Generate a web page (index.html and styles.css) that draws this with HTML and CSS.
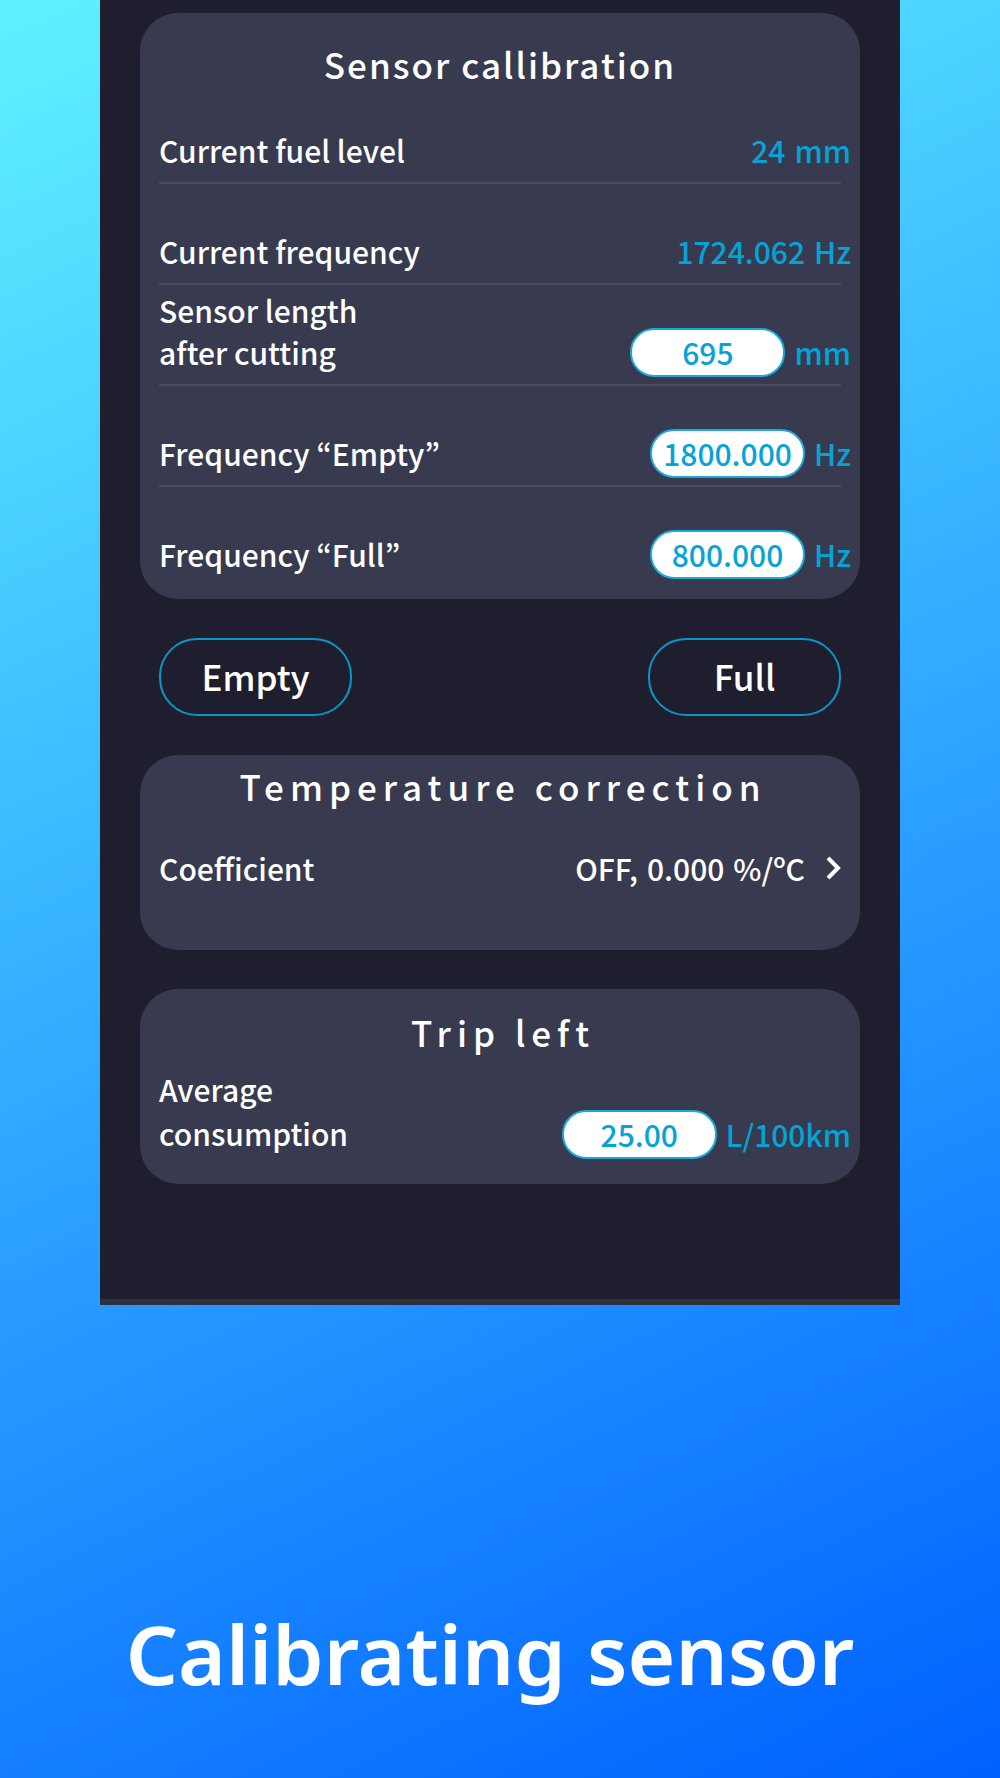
FILE: index.html
```
<!DOCTYPE html>
<html lang="en">

<head>
    <meta charset="UTF-8">
    <meta name="viewport" content="width=device-width, initial-scale=1.0">
    <title>Calibrating sensor</title>

    <link rel="stylesheet" href="styles.css">
</head>

<body>
    <main class="screen">
        <section class="card card-sensor">
            <h2 class="title">Sensor callibration</h2>
            <div class="row">
                <span class="label">Current fuel level</span>
                <div class="value"><span>24</span><span>mm</span></div>
            </div>
            <div class="row">
                <span class="label">Current frequency</span>
                <div class="value"><span>1724.062</span><span>Hz</span></div>
            </div>
            <div class="row">
                <label class="label" for="length">Sensor length<br>after cutting</label>
                <div class="value"><input type="text" id="length" value="695"><span>mm</span></div>
            </div>
            <div class="row">
                <label class="label" for="freqEmpty">Frequency “Empty”</label>
                <div class="value"><input type="text" id="freqEmpty" value="1800.000"><span>Hz</span></div>
            </div>
            <div class="row">
                <label class="label" for="freqFull">Frequency “Full”</label>
                <div class="value"><input type="text" id="freqFull" value="800.000"><span>Hz</span></div>
            </div>
        </section>

        <div class="actions">
            <button type="button">Empty</button>
            <button type="button">Full</button>
        </div>

        <section class="card card-temperature">
            <h2 class="title title-wide">Temperature correction</h2>
            <a class="row" href="#">
                <span class="label">Coefficient</span>
                <span class="setting">
                    <span>OFF,</span>
                    <span>0.000</span>
                    <span>%/ºC</span>
                    <svg class="chevron" viewBox="0 0 15 24" aria-hidden="true">
                        <path d="M2 2l10 10-10 10" />
                    </svg>
                </span>
            </a>
        </section>

        <section class="card card-trip">
            <h2 class="title title-wide">Trip left</h2>
            <div class="row">
                <label class="label" for="consumption">Average<br>consumption</label>
                <div class="value"><input type="text" id="consumption" value="25.00"><span>L/100km</span></div>
            </div>
        </section>
    </main>

    <h1 class="caption">Calibrating sensor</h1>
</body>

</html>
```

FILE: styles.css
```
* {
    margin: 0;
    padding: 0;
    box-sizing: border-box;
}

body {
    min-height: 100vh;
    font-family: "Noto Sans CJK JP", "Noto Sans", sans-serif;
    font-weight: 500;
    color: #fff;
    background: linear-gradient(155deg, #60f1ff, #0060ff);
}

.screen {
    width: 80%;
    margin: 0 auto;
    padding: 13px 40px 115px;
    background-color: #1f1e2e;
    border-bottom: 6px solid #302f3d;
}

/* Cards */

.card {
    padding: 0 19px;
    border-radius: 38px;
    background-color: #383a4f;
}

.card-sensor {
    padding-top: 32px;
    padding-bottom: 11px;
}

.card-temperature {
    padding-top: 12px;
    padding-bottom: 48px;
    margin-bottom: 39px;
}

.card-trip {
    padding-top: 24px;
    padding-bottom: 16px;
}

.title {
    font-size: 35px;
    font-weight: 500;
    line-height: 38px;
    letter-spacing: 2px;
    text-align: center;
}

.title-wide {
    letter-spacing: 6px;
    text-indent: 6px;
}

/* Rows */

.row {
    display: flex;
    justify-content: space-between;
    align-items: flex-end;
    height: 101px;
    padding-bottom: 11px;
    border-bottom: 2px solid #4a4b5f;
    font-size: 30px;
    line-height: 42px;
    color: #fff;
    text-decoration: none;
}

.row:last-child {
    border-color: transparent;
}

.card-temperature .row {
    height: 97px;
}

.card-trip .row {
    height: 117px;
}

.card-trip .label {
    line-height: 44px;
}

.value {
    display: flex;
    align-items: center;
    gap: 9px;
    height: 42px;
    margin-right: -10px;
    color: #05a3d6;
}

.value input {
    width: 155px;
    height: 49px;
    border: 2px solid #1aa9d8;
    border-radius: 24px;
    background-color: #fff;
    font: inherit;
    color: inherit;
    text-align: center;
}

.setting {
    display: flex;
    align-items: center;
    gap: 9px;
}

.chevron {
    width: 15px;
    height: 24px;
    margin-left: 12px;
    fill: none;
    stroke: #fff;
    stroke-width: 4;
}

/* Buttons */

.actions {
    display: flex;
    justify-content: space-between;
    padding: 39px 19px;
}

.actions button {
    width: 193px;
    height: 78px;
    padding-bottom: 2px;
    border: 2px solid #0798c8;
    border-radius: 38px;
    background: none;
    font: inherit;
    font-size: 35px;
    line-height: 40px;
    color: #fff;
}

.caption {
    padding: 292px 40px 60px 20px;
    font-family: "Noto Sans", sans-serif;
    font-size: 82px;
    font-weight: 600;
    line-height: 112px;
    text-align: center;
}
```
